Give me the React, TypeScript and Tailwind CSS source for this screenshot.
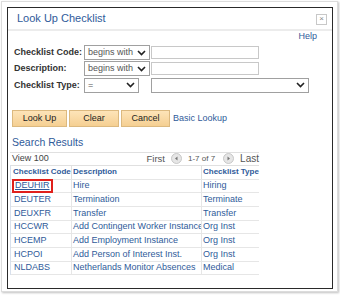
import React from "react";

const Chevron = () => (
  <svg width="9" height="6" viewBox="0 0 9 6" className="shrink-0">
    <path d="M1 1 L4.5 4.5 L8 1" stroke="#222" strokeWidth="1.6" fill="none" />
  </svg>
);

const Select = ({ text, w }: { text: string; w: string }) => (
  <div className={`${w} h-[15px] border border-[#a0a0a0] bg-white flex items-center justify-between pl-[3px] pr-[3px] text-[9px] text-[#555] whitespace-nowrap`}>
    <span className="leading-none">{text}</span>
    <Chevron />
  </div>
);

const Arrow = ({ dir }: { dir: "l" | "r" }) => (
  <svg width="11" height="11" viewBox="0 0 11 11">
    <circle cx="5.5" cy="5.5" r="5" fill="#e6e6e6" stroke="#bdbdbd" strokeWidth="0.8" />
    {dir === "l" ? (
      <path d="M6.5 3.5 L4 5.5 L6.5 7.5 Z" fill="#777" />
    ) : (
      <path d="M4.5 3.5 L7 5.5 L4.5 7.5 Z" fill="#777" />
    )}
  </svg>
);

const rows = [
  ["DEUHIR", "Hire", "Hiring"],
  ["DEUTER", "Termination", "Terminate"],
  ["DEUXFR", "Transfer", "Transfer"],
  ["HCCWR", "Add Contingent Worker Instance", "Org Inst"],
  ["HCEMP", "Add Employment Instance", "Org Inst"],
  ["HCPOI", "Add Person of Interest Inst.", "Org Inst"],
  ["NLDABS", "Netherlands Monitor Absences", "Medical"],
];

export default function App() {
  return (
    <div className="w-[340px] h-[295px] bg-white" style={{ fontFamily: "Arial, 'Liberation Sans', sans-serif" }}>
      <div className="ml-[1px] pt-[1px]">
        <div className="w-[337px] h-[291px] border border-[#dcdcdc] shadow-[1px_1px_2px_rgba(0,0,0,0.25)] p-[5px]">
          <div className="w-[326px] h-[282px] border border-[#2a2a2a] bg-white flex flex-col">
            {/* title bar */}
            <div className="h-[23px] border-b-2 border-[#ececec] flex items-center justify-between pl-[9px] pr-[5px]">
              <span className="text-[11px] text-[#2f5b9a] leading-none">Look Up Checklist</span>
              <div className="w-[11px] h-[11px] border border-[#c8c8c8] flex items-center justify-center text-[8px] text-[#888] leading-none mt-[1px]">×</div>
            </div>
            {/* help */}
            <div className="h-[12px] flex justify-end pr-[15px]">
              <span className="text-[9px] text-[#2f5b9a] leading-none mt-[1px]">Help</span>
            </div>
            {/* form rows */}
            <div className="pl-[6px] flex flex-col gap-[1px] mt-[2px]">
              <div className="flex items-center h-[15px]">
                <span className="w-[70px] text-[9px] font-bold text-[#333] leading-none whitespace-nowrap">Checklist Code:</span>
                <Select text="begins with" w="w-[66px]" />
                <div className="ml-[1px] w-[108px] h-[13px] border border-[#c8c8c8]" />
              </div>
              <div className="flex items-center h-[15px]">
                <span className="w-[70px] text-[9px] font-bold text-[#333] leading-none whitespace-nowrap">Description:</span>
                <Select text="begins with" w="w-[66px]" />
                <div className="ml-[1px] w-[108px] h-[13px] border border-[#c8c8c8]" />
              </div>
              <div className="flex items-center h-[16px]">
                <span className="w-[70px] text-[9px] font-bold text-[#333] leading-none whitespace-nowrap">Checklist Type:</span>
                <Select text="=" w="w-[55px]" />
                <div className="ml-[12px]">
                  <Select text="" w="w-[158px]" />
                </div>
              </div>
            </div>
            {/* buttons */}
            <div className="flex items-center gap-[2px] pl-[4px] mt-[17px]">
              {[
                ["Look Up", "w-[55px]"],
                ["Clear", "w-[50px]"],
                ["Cancel", "w-[49px]"],
              ].map(([t, w]) => (
                <div key={t} className={`${w} h-[17px] border border-[#dcb97f] bg-gradient-to-b from-[#fde4b8] to-[#f5cf92] flex items-center justify-center text-[9px] text-[#222] leading-none`}>
                  {t}
                </div>
              ))}
              <span className="ml-[1px] text-[9px] text-[#2f5b9a] leading-none">Basic Lookup</span>
            </div>
            {/* search results */}
            <div className="pl-[4px] mt-[10px] text-[10.5px] text-[#2f5b9a] leading-none">Search Results</div>
            <div className="ml-[2px] mt-[4px] w-[249px] text-[9px] leading-none">
              <div className="h-[13px] flex items-center justify-between border-t border-[#e0e0e0] pl-[2px]">
                <span className="text-[#444]">View 100</span>
                <div className="flex items-center text-[#555]">
                  <span className="text-[9.5px]">First</span>
                  <span className="ml-[6px] flex"><Arrow dir="l" /></span>
                  <span className="ml-[6px] text-[8px]">1-7 of 7</span>
                  <span className="ml-[8px] flex"><Arrow dir="r" /></span>
                  <span className="ml-[6px] text-[10px]">Last</span>
                </div>
              </div>
              <div className="border-l border-[#d8e0ec]">
                <div className="flex h-[14px] border-t border-[#e0e0e0] font-bold text-[#2f5b9a] text-[8px]">
                  <div className="w-[61px] border-r border-[#e0e0e0] flex items-center pl-[2px] whitespace-nowrap">Checklist Code</div>
                  <div className="w-[130px] border-r border-[#e0e0e0] flex items-center pl-[1px]">Description</div>
                  <div className="flex-1 flex items-center pl-[1px] whitespace-nowrap">Checklist Type</div>
                </div>
                {rows.map((r, i) => (
                  <div key={r[0]} className="flex h-[13.7px] border-t border-[#e6e6e6] text-[#2f5b9a]">
                    <div className="w-[61px] border-r border-[#e6e6e6] flex items-center pl-[1px]">
                      {i === 0 ? (
                        <span className="border-2 border-[#e0201b] px-[1px] h-[14px] flex items-center underline">DEUHIR</span>
                      ) : (
                        <span className="pl-[2px]">{r[0]}</span>
                      )}
                    </div>
                    <div className="w-[130px] border-r border-[#e6e6e6] flex items-center pl-[1px] whitespace-nowrap overflow-hidden">{r[1]}</div>
                    <div className="flex-1 flex items-center pl-[1px]">{r[2]}</div>
                  </div>
                ))}
                <div className="border-t border-[#e6e6e6]" />
              </div>
            </div>
          </div>
        </div>
      </div>
    </div>
  );
}
